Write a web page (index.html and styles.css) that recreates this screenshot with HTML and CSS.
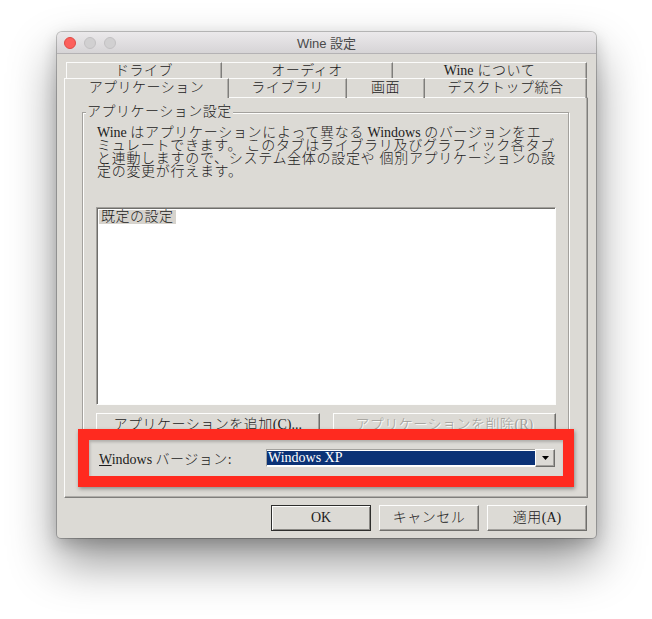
FILE: index.html
```html
<!DOCTYPE html>
<html lang="ja">
<head>
<meta charset="utf-8">
<title>Wine 設定</title>
<link rel="stylesheet" href="styles.css">
</head>
<body>
<div class="window">
  <div class="titlebar">
    <div class="lights">
      <span class="light red"></span>
      <span class="light"></span>
      <span class="light"></span>
    </div>
    <div class="title">Wine 設定</div>
    <div></div>
  </div>
  <div class="content">
    <div class="tabrow back">
      <div class="tab">ドライブ</div>
      <div class="tab">オーディオ</div>
      <div class="tab"><span class="latin">Wine</span> について</div>
    </div>
    <div class="tabrow front">
      <div class="tab selected">アプリケーション</div>
      <div class="tab">ライブラリ</div>
      <div class="tab">画面</div>
      <div class="tab">デスクトップ統合</div>
    </div>
    <div class="panel">
      <div class="group">
        <div class="group-title">アプリケーション設定</div>
        <div class="desc">
          <div class="line"><span class="latin">Wine </span>はアプリケーションによって異なる<span class="latin"> Windows </span>のバージョンをエ</div>
          <div class="line">ミュレートできます。 このタブはライブラリ及びグラフィック各タブ</div>
          <div class="line">と連動しますので、システム全体の設定や 個別アプリケーションの設</div>
          <div class="line">定の変更が行えます。</div>
        </div>
        <div class="listbox">
          <div class="item selected">既定の設定</div>
        </div>
        <div class="group-buttons">
          <div class="btn">アプリケーションを追加<span class="latin">(C)...</span></div>
          <div class="btn disabled">アプリケーションを削除<span class="latin">(R)</span></div>
        </div>
        <div class="version-row">
          <div class="version-label"><span class="latin"><span class="u">W</span>indows </span>バージョン:</div>
          <div class="combo">
            <div class="combo-value">Windows XP</div>
            <div class="combo-btn">
              <svg width="7" height="4" viewBox="0 0 7 4"><polygon points="0,0 7,0 3.5,4" fill="#000"/></svg>
            </div>
          </div>
        </div>
      </div>
    </div>
    <div class="dialog-buttons">
      <div class="btn default"><span class="latin">OK</span></div>
      <div class="btn">キャンセル</div>
      <div class="btn">適用<span class="latin">(A)</span></div>
    </div>
  </div>
  <div class="highlight"></div>
</div>
</body>
</html>
```
FILE: styles.css
```css
html, body {
  margin: 0;
  background: #ffffff;
}
body {
  padding: 32px 0 0 57px;
  height: 619px;
  box-sizing: border-box;
  overflow: hidden;
}
.window {
  position: relative;
  width: 539px;
  height: 506px;
  box-sizing: border-box;
  background: #dcdad5;
  border-radius: 5px 5px 4px 4px;
  box-shadow: 0 0 0 1px rgba(0,0,0,0.22), 0 24px 48px rgba(0,0,0,0.42), 0 6px 16px rgba(0,0,0,0.18);
  overflow: hidden;
  font-family: "Liberation Serif", "Noto Sans CJK JP", serif;
  font-size: 14px;
  color: #1c1c1c;
}
.latin {
  letter-spacing: 0;
}
.titlebar {
  height: 22px;
  box-sizing: border-box;
  display: grid;
  grid-template-columns: 1fr auto 1fr;
  align-items: center;
  background: linear-gradient(#ebe9eb, #d6d4d6);
  border-bottom: 1px solid #b4b2b4;
}
.lights {
  display: flex;
  gap: 8px;
  padding-left: 7px;
}
.light {
  width: 12px;
  height: 12px;
  box-sizing: border-box;
  border-radius: 50%;
  background: #d1d0d1;
  border: 1px solid #c2c0c2;
}
.light.red {
  background: #fc605c;
  border-color: #de4a45;
}
.title {
  font-family: "Liberation Sans", "Noto Sans CJK JP", sans-serif;
  font-size: 13px;
  color: #4a4a4a;
}
.content {
  padding: 8px 8px 7px 7px;
  letter-spacing: 0.5px;
}
.tabrow {
  display: grid;
  font-weight: 300;
}
.tabrow.back {
  grid-template-columns: 156px 171px 1fr;
  height: 16px;
  margin: 0 1px 0 2px;
}
.tabrow.front {
  grid-template-columns: 165px 118px 78px 1fr;
  height: 19px;
  margin: 0 1px 0 0;
  position: relative;
  z-index: 1;
}
.tab {
  box-sizing: border-box;
  border-top: 1px solid #fbfbfa;
  border-left: 1px solid #fbfbfa;
  border-right: 1px solid #7f7e7b;
  box-shadow: inset -1px 0 0 #aeaca8;
  text-align: center;
  white-space: nowrap;
}
.back .tab {
  line-height: 15px;
}
.front .tab {
  line-height: 18px;
}
.tab + .tab {
  border-left: none;
}
.front .tab.selected {
  height: 20px;
  background: #dcdad5;
}
.panel {
  height: 401px;
  box-sizing: border-box;
  border-top: 1px solid #fbfbfa;
  border-left: 1px solid #fbfbfa;
  border-right: 1px solid #7f7e7b;
  border-bottom: 1px solid #7f7e7b;
  box-shadow: inset -1px -1px 0 #aeaca8;
  padding-top: 14px;
  font-weight: 300;
}
.group {
  margin: 0 18px 0 17px;
  border: 1px solid #a3a19d;
  box-shadow: inset 1px 1px 0 #fdfdfc, 1px 1px 0 #fdfdfc;
  padding: 0 12px 14px 13px;
}
.group-title {
  width: fit-content;
  margin: -9px 0 0 -10px;
  padding: 0 1px;
  background: #dcdad5;
  line-height: 16px;
  white-space: nowrap;
}
.desc {
  margin: 6px 0 0 1px;
  line-height: 13px;
  letter-spacing: 0.7px;
}
.line {
  white-space: nowrap;
}
.listbox {
  margin-top: 29px;
  height: 198px;
  box-sizing: border-box;
  background: #fff;
  border-top: 1px solid #a3a19d;
  border-left: 1px solid #a3a19d;
  border-right: 1px solid #fdfdfc;
  border-bottom: 1px solid #fdfdfc;
  box-shadow: inset 1px 1px 0 #6f6e6b;
  padding: 2px 0 0 2px;
}
.item {
  width: fit-content;
  padding: 0 2px;
  line-height: 14px;
}
.item.selected {
  background: #d6d3cd;
}
.group-buttons {
  margin-top: 8px;
  display: grid;
  grid-template-columns: 1fr 1fr;
  gap: 13px;
}
.btn {
  box-sizing: border-box;
  background: #dcdad5;
  border-top: 1px solid #fdfdfc;
  border-left: 1px solid #fdfdfc;
  border-right: 1px solid #6f6e6b;
  border-bottom: 1px solid #6f6e6b;
  box-shadow: inset -1px -1px 0 #a3a19d;
  text-align: center;
  white-space: nowrap;
}
.group-buttons .btn {
  height: 24px;
  line-height: 22px;
}
.btn.disabled {
  color: #a09e99;
  text-shadow: 1px 1px 0 #fdfdfc;
}
.u {
  text-decoration: underline;
}
.version-row {
  margin-top: 12px;
  display: flex;
  align-items: center;
  height: 18px;
}
.version-label {
  margin-left: 3px;
  white-space: nowrap;
}
.combo {
  margin-left: auto;
  margin-right: 1px;
  width: 289px;
  height: 18px;
  box-sizing: border-box;
  display: flex;
  background: #fff;
  border-top: 1px solid #a3a19d;
  border-left: 1px solid #a3a19d;
  border-right: 1px solid #fdfdfc;
  border-bottom: 1px solid #fdfdfc;
  letter-spacing: 0;
}
.combo-value {
  flex: 1;
  margin: 1px 0;
  background: #0b3276;
  color: #fff;
  padding-left: 1px;
  line-height: 14px;
}
.combo-btn {
  width: 20px;
  margin: -1px -1px -1px 0;
  box-sizing: border-box;
  background: #dcdad5;
  border-top: 1px solid #fdfdfc;
  border-left: 1px solid #fdfdfc;
  border-right: 1px solid #6f6e6b;
  border-bottom: 1px solid #6f6e6b;
  box-shadow: inset -1px -1px 0 #a3a19d;
  display: flex;
  align-items: center;
  justify-content: center;
}
.combo-btn svg {
  display: block;
}
.dialog-buttons {
  margin-top: 7px;
  display: flex;
  justify-content: flex-end;
  gap: 8px;
  padding-right: 1px;
  font-weight: 300;
}
.dialog-buttons .btn {
  width: 100px;
  height: 26px;
  line-height: 24px;
}
.dialog-buttons .btn.default {
  border: 1px solid #2e2e2d;
  box-shadow: inset 1px 1px 0 #fdfdfc, inset -1px -1px 0 #8a8884;
}
.highlight {
  position: absolute;
  left: 21px;
  top: 397px;
  width: 496px;
  height: 58px;
  box-sizing: border-box;
  border: 11px solid #ff2a1f;
  box-shadow: 1px 2px 4px rgba(0,0,0,0.35), inset 1px 2px 3px rgba(0,0,0,0.2);
}
```
